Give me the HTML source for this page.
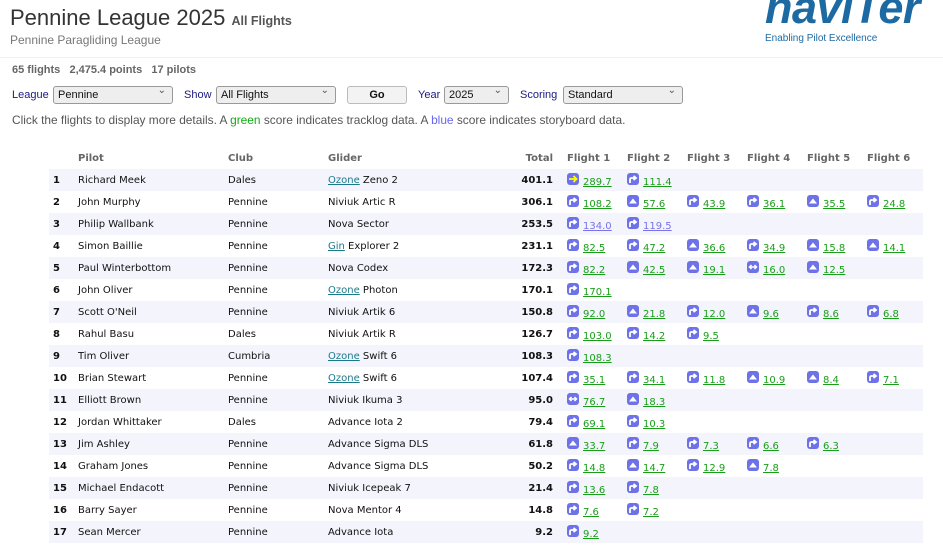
<!DOCTYPE html>
<html><head><meta charset="utf-8"><style>
body{margin:0;background:#fff;font-family:"DejaVu Sans",Verdana,sans-serif;width:943px;height:552px;overflow:hidden;position:relative;color:#111}
.h1{position:absolute;left:10px;top:5px;font-family:"Liberation Sans",sans-serif;font-size:22px;color:#333}
.h1 small{font-size:12.5px;font-weight:bold;color:#555}
.sub{position:absolute;left:10px;top:33px;font-family:"Liberation Sans",sans-serif;font-size:12px;color:#777}
.logo{position:absolute;left:765px;top:-18px;font-family:"Liberation Sans",sans-serif;font-weight:bold;font-style:italic;font-size:45px;color:#1d6aa3;letter-spacing:-0.5px}
.tag{position:absolute;left:765px;top:33px;font-family:"Liberation Sans",sans-serif;font-size:10px;color:#1d6aa3}
.hr{position:absolute;left:0;top:57px;width:943px;height:1px;background:#f0f0f5}
.stats{position:absolute;left:12px;top:64px;font-family:"Liberation Sans",sans-serif;font-size:11px;font-weight:bold;color:#666}
.ctl{position:absolute;top:85px;font-family:"Liberation Sans",sans-serif;font-size:11px;color:#1a1a80}
.sel{position:absolute;top:86px;border:1px solid #999;border-radius:3px;background:#eee;font-family:"Liberation Sans",sans-serif;font-size:11px;line-height:16px;padding-left:4px;box-sizing:border-box;height:18px;color:#111}
.sel:after{content:"⌄";position:absolute;right:6px;top:-4px;font-size:10px;color:#555}
.go{position:absolute;left:347px;top:86px;width:60px;height:18px;border:1px solid #bbb;border-radius:3px;background:#f3f3f3;font-family:"Liberation Sans",sans-serif;font-size:11px;font-weight:bold;text-align:center;line-height:17px;box-sizing:border-box}
.info{position:absolute;left:12px;top:113px;font-family:"Liberation Sans",sans-serif;font-size:11.9px;color:#555}
table{position:absolute;left:49px;top:147px;border-collapse:collapse;font-size:10px;width:874px;table-layout:fixed}
td,th{height:22px;padding:0 0 0 3px;white-space:nowrap;vertical-align:middle}
th{text-align:left;font-weight:bold;color:#666;height:22px}
tr.o td{background:#f4f4fd}
td.r{font-weight:bold;padding-left:4px}
td.t{text-align:right;font-weight:bold;padding-right:12px}
td.f,th.f{padding-left:2px}
a{color:#1a9e1a;text-decoration:underline;position:relative;top:1px}
a.b{color:#7a72e8}
a.z{color:#1a7a8a;top:0}
svg{vertical-align:-1px;margin-right:4px}
</style></head><body>
<div class="h1">Pennine League 2025 <small>All Flights</small></div>
<div class="sub">Pennine Paragliding League</div>
<div class="logo">naviTer</div>
<div class="tag">Enabling Pilot Excellence</div>
<div class="hr"></div>
<div class="stats">65 flights&nbsp;&nbsp; 2,475.4 points&nbsp;&nbsp; 17 pilots</div>
<div class="ctl" style="left:12px;top:89px">League</div>
<div class="sel" style="left:53px;width:120px">Pennine</div>
<div class="ctl" style="left:184px;top:89px">Show</div>
<div class="sel" style="left:216px;width:120px">All Flights</div>
<div class="go">Go</div>
<div class="ctl" style="left:418px;top:89px">Year</div>
<div class="sel" style="left:444px;width:65px">2025</div>
<div class="ctl" style="left:520px;top:89px">Scoring</div>
<div class="sel" style="left:563px;width:120px">Standard</div>
<div class="info">Click the flights to display more details. A <span style="color:#1a1">green</span> score indicates tracklog data. A <span style="color:#66e">blue</span> score indicates storyboard data.</div>
<svg width="0" height="0" style="position:absolute"><defs>
<g id="r"><rect width="12" height="12" rx="3" fill="#6e72e8"/><path d="M3 10V6.5Q3 5 4.5 5H8M6.5 3L9 5L6.5 7" stroke="#fff" stroke-width="1.8" fill="none"/></g>
<g id="y"><rect width="12" height="12" rx="3" fill="#6e72e8"/><path d="M2 6H9M6.5 3L9.5 6L6.5 9" stroke="#ff0" stroke-width="1.8" fill="none"/></g>
<g id="t"><rect width="12" height="12" rx="3" fill="#6e72e8"/><path d="M2 8.5L6 3.5L10 8.5Z" fill="#fff"/></g>
<g id="d"><rect width="12" height="12" rx="3" fill="#6e72e8"/><path d="M3 6H9M4.5 4L2.5 6L4.5 8M7.5 4L9.5 6L7.5 8" stroke="#fff" stroke-width="1.5" fill="none"/></g>
</defs></svg>
<table id="T">
<colgroup><col style="width:26px"><col style="width:150px"><col style="width:100px"><col style="width:170px"><col style="width:70px"><col style="width:60px"><col style="width:60px"><col style="width:60px"><col style="width:60px"><col style="width:60px"><col style="width:58px"></colgroup>
<tr><th></th><th>Pilot</th><th>Club</th><th>Glider</th><th style="text-align:right;padding-right:12px">Total</th><th class=f>Flight 1</th><th class=f>Flight 2</th><th class=f>Flight 3</th><th class=f>Flight 4</th><th class=f>Flight 5</th><th class=f>Flight 6</th></tr>
</table>
<script>
var D=[
["Richard Meek","Dales","<a class=z>Ozone</a> Zeno 2","401.1","y289.7 r111.4"],
["John Murphy","Pennine","Niviuk Artic R","306.1","r108.2 t57.6 r43.9 r36.1 t35.5 r24.8"],
["Philip Wallbank","Pennine","Nova Sector","253.5","rB134.0 rB119.5"],
["Simon Baillie","Pennine","<a class=z>Gin</a> Explorer 2","231.1","r82.5 r47.2 t36.6 r34.9 t15.8 t14.1"],
["Paul Winterbottom","Pennine","Nova Codex","172.3","r82.2 t42.5 t19.1 d16.0 t12.5"],
["John Oliver","Pennine","<a class=z>Ozone</a> Photon","170.1","r170.1"],
["Scott O'Neil","Pennine","Niviuk Artik 6","150.8","r92.0 t21.8 r12.0 t9.6 r8.6 r6.8"],
["Rahul Basu","Dales","Niviuk Artik R","126.7","r103.0 r14.2 r9.5"],
["Tim Oliver","Cumbria","<a class=z>Ozone</a> Swift 6","108.3","r108.3"],
["Brian Stewart","Pennine","<a class=z>Ozone</a> Swift 6","107.4","r35.1 r34.1 r11.8 t10.9 t8.4 r7.1"],
["Elliott Brown","Pennine","Niviuk Ikuma 3","95.0","d76.7 t18.3"],
["Jordan Whittaker","Dales","Advance Iota 2","79.4","r69.1 r10.3"],
["Jim Ashley","Pennine","Advance Sigma DLS","61.8","t33.7 r7.9 r7.3 r6.6 r6.3"],
["Graham Jones","Pennine","Advance Sigma DLS","50.2","r14.8 t14.7 r12.9 t7.8"],
["Michael Endacott","Pennine","Niviuk Icepeak 7","21.4","r13.6 r7.8"],
["Barry Sayer","Pennine","Nova Mentor 4","14.8","r7.6 r7.2"],
["Sean Mercer","Pennine","Advance Iota","9.2","r9.2"]];
var h="";
D.forEach(function(r,i){
 h+='<tr class="'+(i%2?'':'o')+'"><td class=r>'+(i+1)+'</td><td>'+r[0]+'</td><td>'+r[1]+'</td><td>'+r[2]+'</td><td class=t>'+r[3]+'</td>';
 var f=r[4].split(" ");
 for(var k=0;k<6;k++){
  if(k<f.length){var s=f[k],ic=s[0],b=s[1]=="B",v=s.slice(b?2:1);
   h+='<td class=f><svg width="12" height="12"><use href="#'+ic+'"/></svg><a'+(b?' class=b':'')+'>'+v+'</a></td>';}
  else h+='<td class=f></td>';
 }
 h+='</tr>';
});
document.getElementById("T").insertAdjacentHTML("beforeend",h);
</script>
</body></html>
